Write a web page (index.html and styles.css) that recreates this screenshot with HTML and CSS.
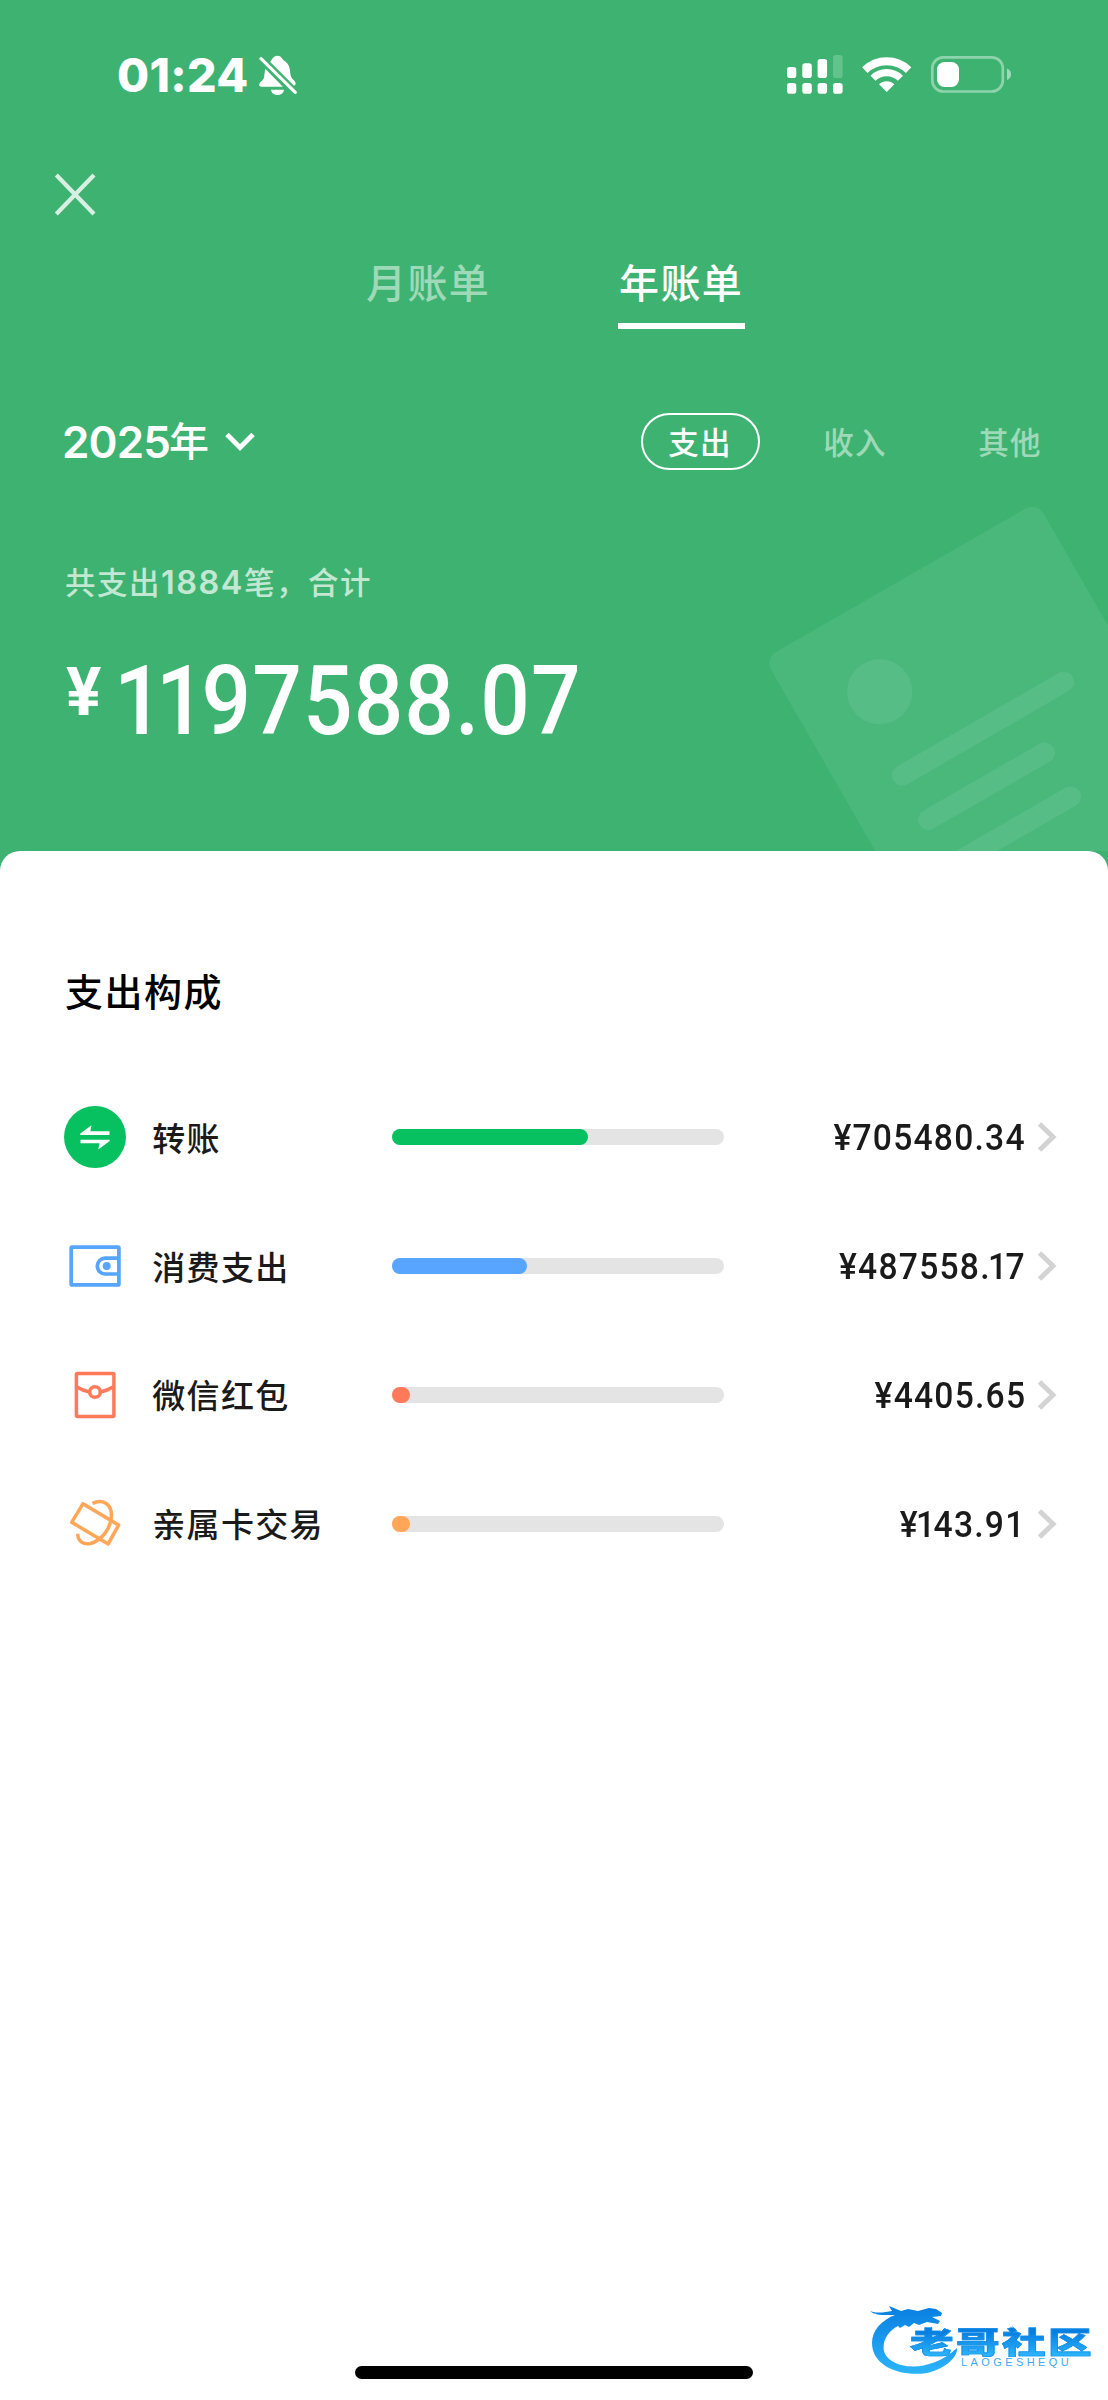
FILE: index.html
```html
<!DOCTYPE html>
<html lang="zh-CN">
<head>
<meta charset="utf-8">
<title>年账单</title>
<link rel="stylesheet" href="styles.css">
</head>
<body>
<div class="screen">
  <header class="hero">
    <svg class="hero-art" viewBox="760 500 348 351" aria-hidden="true">
      <rect x="764.7" y="658.6" width="314" height="520" rx="13" transform="rotate(-29.9 764.7 658.6)" fill="#fff" fill-opacity=".07"/>
      <g fill="#57bd86" stroke="#57bd86" stroke-linecap="round">
        <circle cx="879.7" cy="691.7" r="32.5" stroke="none"/>
        <path d="M902.3 775.3 1063.7 682M928.3 819.7 1044.7 752.7M1070.7 796.7 940 872" stroke-width="20.5"/>
      </g>
    </svg>

    <div class="status">
      <div class="status-left">
        <span class="clock">01:24</span>
        <svg width="40" height="42" viewBox="0 0 40 42" fill="#fff">
          <path d="M12 7.7C14 6.8 14.2 2 19.3 1.7C23.800 1.700 24 5.500 27 7.300C30.500 9.800 31.500 13 32 17C32.500 21.500 33 23.500 35.500 26C38.300 28.700 38.300 30.500 36 31.700Z"/>
          <path d="M7.300 14.700 24.900 32.700H3.500C.8 32.700.6 30 2.300 28.300C5.500 25.500 6.500 24 6.300 21Z"/>
          <path d="M13 35.700H26C25.500 39.300 22.700 41 19.500 41S13.500 39.300 13 35.700Z"/>
          <path d="M3 4.700 37.300 38.300" stroke="#fff" stroke-width="3.200" stroke-linecap="round"/>
        </svg>
      </div>
      <div class="status-right">
        <svg width="58" height="42" viewBox="0 0 58 42" fill="#fff">
          <rect x="1" y="13" width="9.300" height="11" rx="2.800"/>
          <rect x="16.300" y="9.300" width="9.500" height="14.700" rx="2.800"/>
          <rect x="31.600" y="5" width="9.500" height="19" rx="2.800"/>
          <rect x="47" y="1" width="9.600" height="23" rx="2.800" opacity=".2"/>
          <rect x="1" y="29" width="9.300" height="10.700" rx="2.800"/>
          <rect x="16.300" y="29" width="9.500" height="10.700" rx="2.800"/>
          <rect x="31.600" y="29" width="9.500" height="10.700" rx="2.800"/>
          <rect x="47" y="29" width="9.600" height="10.700" rx="2.800"/>
        </svg>
        <svg class="wifi" width="52" height="42" viewBox="0 0 52 42" fill="none" stroke="#fff">
          <path d="M3.800 16.100A31.500 31.500 0 0 1 47.600 16.100" stroke-width="7.800"/>
          <path d="M12 24.300A19.600 19.600 0 0 1 39.400 24.300" stroke-width="7.200"/>
          <path d="M18 30.300A11 11 0 0 1 33.400 30.300L25.700 38Z" fill="#fff" stroke="none"/>
        </svg>
        <svg width="82" height="42" viewBox="0 0 82 42">
          <rect x="2.300" y="3.300" width="70.500" height="34.200" rx="11" fill="none" stroke="#fff" stroke-opacity=".42" stroke-width="2.700"/>
          <rect x="7" y="8" width="22" height="25" rx="7.500" fill="#fff"/>
          <path d="M77 14.600Q81 16 81 20.300T77 26Z" fill="#fff" fill-opacity=".5"/>
        </svg>
      </div>
    </div>

    <svg class="close" width="44" height="44" viewBox="0 0 44 44"><path d="M3.300 3 41 42M41 3 3.300 42" stroke="#fff" stroke-opacity=".8" stroke-width="4.200"/></svg>

    <nav class="tabs">
      <span class="tab">月账单</span>
      <span class="tab tab-active">年账单</span>
    </nav>

    <div class="filters">
      <div class="year"><span class="year-number">2025</span><span class="year-unit">年</span>
        <svg class="year-arrow" width="30" height="20" viewBox="0 0 30 20"><path d="M2 2.500 15 15.500 28 2.500" fill="none" stroke="#fff" stroke-width="4.800"/></svg>
      </div>
      <div class="types">
        <span class="type type-active">支出</span>
        <span class="type">收入</span>
        <span class="type">其他</span>
      </div>
    </div>

    <p class="count">共支出<span class="count-number">1884</span>笔，合计</p>
    <p class="total"><span class="yen">¥</span><span class="digits"><span class="ones">11</span>97588.07</span></p>
  </header>

  <main class="panel">
    <h2 class="title">支出构成</h2>
    <div class="row">
      <svg class="icon" viewBox="0 0 64 64"><circle cx="32" cy="32" r="31" fill="#07c160"/><path d="M17.300 30H46.500V26.300H27.300L28.500 20.300 17.300 28.500ZM46.700 34.700H17.500V38.300H36.500L35.300 44.400 46.700 36Z" fill="#fff"/></svg>
      <span class="label">转账</span>
      <div class="bar"><div class="fill green" style="width:196px"></div></div>
      <span class="amount">¥705480.34</span>
      <svg class="chevron" viewBox="0 0 20 30"><path d="M2.500 2 16 15 2.500 28"/></svg>
    </div>
    <div class="row">
      <svg class="icon" viewBox="0 0 64 64" fill="none" stroke="#57a5ff" stroke-width="3.700"><rect x="8.200" y="13.200" width="47.700" height="37.700" rx="1"/><path d="M55.800 24.200H42.200A7.900 7.900 0 0 0 42.200 40H55.800"/><circle cx="43.700" cy="32" r="4" fill="#57a5ff" stroke="none"/></svg>
      <span class="label">消费支出</span>
      <div class="bar"><div class="fill blue" style="width:135.500px"></div></div>
      <span class="amount">¥487558.<span class="one">1</span>7</span>
      <svg class="chevron" viewBox="0 0 20 30"><path d="M2.500 2 16 15 2.500 28"/></svg>
    </div>
    <div class="row">
      <svg class="icon" viewBox="0 0 64 64" fill="none" stroke="#ff7a5a" stroke-width="3.500"><rect x="13.400" y="10.400" width="37.500" height="43" rx="1"/><circle cx="32" cy="29" r="5.300"/><path d="M14 24Q19.500 27.500 26.500 29M50 24Q44.500 27.500 37.500 29"/></svg>
      <span class="label">微信红包</span>
      <div class="bar"><div class="fill red" style="width:18px"></div></div>
      <span class="amount">¥4405.65</span>
      <svg class="chevron" viewBox="0 0 20 30"><path d="M2.500 2 16 15 2.500 28"/></svg>
    </div>
    <div class="row">
      <svg class="icon" viewBox="0 0 64 64" fill="none" stroke="#ffa659" stroke-width="3.500" stroke-linejoin="round"><path d="M19.900 11.800 55.600 33.100 45.200 51.900 8.700 30.300Z"/><path d="M29.500 11.400C39 6.500 49 11.500 48.400 24C48 36 39 48.500 27.500 51.500C20 53 14.500 49 14.800 41.700"/></svg>
      <span class="label">亲属卡交易</span>
      <div class="bar"><div class="fill orange" style="width:18px"></div></div>
      <span class="amount">¥<span class="one">1</span>43.91</span>
      <svg class="chevron" viewBox="0 0 20 30"><path d="M2.500 2 16 15 2.500 28"/></svg>
    </div>
  </main>

  <div class="watermark">
    <svg class="dragon" width="96" height="76" viewBox="0 0 96 76">
      <defs><linearGradient id="sky" x1="0" y1="0" x2="0" y2="1"><stop offset="0" stop-color="#087ee0"/><stop offset="1" stop-color="#2bb4fa"/></linearGradient></defs>
      <path fill="url(#sky)" d="M0 11C8 14 15 12 22 11L19 6 31 11 38 9 48 11 59 8 66 9 72 13 71 16 62 17 70 21 68 24 57 22 49 25 44 23 39 27 35 25 30 28 28 26C18 31 12 41 14 51C18 68 57 76 87 48C88 58 74 69 57 73C32 77 2 67 2 43C2 30 12 20 25 15C15 15 6 16 0 11Z"/>
    </svg>
    <div class="watermark-name">老哥社区</div>
    <div class="watermark-latin">LAOGESHEQU</div>
  </div>
  <div class="home-bar"></div>
</div>
</body>
</html>
```
FILE: styles.css
```css
* { box-sizing: border-box; }
body {
  margin: 0;
  font-family: Inter, "Noto Sans CJK SC", sans-serif;
  background: #3eb371;
}
p, h2 { margin: 0; }
svg { display: block; flex: none; }
.screen {
  position: relative;
  display: flex;
  flex-direction: column;
  width: 1108px;
  height: 2400px;
  overflow: hidden;
  background: #3eb371;
  color: #fff;
}

.hero { position: relative; flex: none; height: 851px; padding-top: 54px; }
.hero-art { position: absolute; right: 0; top: 500px; width: 348px; height: 351px; }

.status { display: flex; justify-content: space-between; height: 42px; padding: 0 96px 0 117px; }
.status-left, .status-right { display: flex; align-items: center; }
.clock { width: 141px; font-size: 46.500px; font-weight: 800; line-height: 42px; letter-spacing: .300px; white-space: nowrap; }
.wifi { margin: 0 17px; }

.close { margin: 76px 0 0 53px; }
.tabs { display: flex; gap: 125px; margin-top: 37px; padding-left: 366px; }
.tab {
  width: 127px;
  height: 76px;
  padding-top: 1px;
  font-size: 40px;
  font-weight: 500;
  line-height: 60px;
  letter-spacing: 1.400px;
  color: rgba(255, 255, 255, .5);
}
.tab-active { padding-left: 1px; color: #fff; border-bottom: 6px solid #fff; }

.filters { display: flex; justify-content: space-between; align-items: center; height: 57px; margin-top: 84px; padding: 0 38px 0 62px; }
.year { display: flex; align-items: center; line-height: 56px; font-weight: 500; }
.year-number { width: 107px; font-size: 44px; font-weight: 600; letter-spacing: -.900px; }
.year-unit { font-size: 40px; }
.year-arrow { margin-left: 16px; }
.types { display: flex; gap: 36px; }
.type {
  width: 119px;
  height: 57px;
  padding-top: 1px;
  padding-right: 1px;
  border: 2.500px solid transparent;
  border-radius: 29px;
  font-size: 30.500px;
  font-weight: 500;
  line-height: 53px;
  letter-spacing: 1.200px;
  text-align: center;
  color: rgba(255, 255, 255, .5);
}
.type-active { border-color: #fff; color: #fff; }

.count { margin: 91px 0 0 65px; font-size: 30.500px; font-weight: 500; line-height: 44px; letter-spacing: 1.500px; color: rgba(255, 255, 255, .7); }
.count-number { font-size: 32.500px; font-weight: 600; letter-spacing: 1.500px; }
.total { display: flex; height: 110px; margin: 41px 0 0 66px; font-family: Roboto, sans-serif; font-size: 97px; font-weight: 500; line-height: 110px; }
.yen { width: 48px; font-size: 66px; font-weight: 700; line-height: 94px; }
.digits { letter-spacing: 1.200px; transform: scaleX(.9); transform-origin: 0 50%; }
.ones { margin-right: 4px; letter-spacing: -8.500px; }

.panel { flex: 1; padding: 115px 0 0; border-radius: 20px 20px 0 0; background: #fff; color: #000; }
.title { padding-left: 65px; margin-bottom: 55px; font-size: 38px; font-weight: 500; line-height: 52px; letter-spacing: 1.500px; }
.row { display: flex; align-items: center; height: 128.800px; padding: 0 51px 0 63.300px; color: #1a1a1a; }
.icon { width: 64px; height: 64px; }
.label { width: 239.700px; margin-left: 25px; padding-bottom: 1px; font-size: 33px; font-weight: 500; letter-spacing: 1.300px; }
.bar { width: 332px; height: 16px; border-radius: 8px; background: #e4e4e4; }
.fill { height: 16px; border-radius: 8px; }
.green { background: #07c160; }
.blue { background: #57a5ff; }
.red { background: #ff7a5a; }
.orange { background: #ffa659; }
.amount {
  margin-left: auto;
  margin-right: 11px;
  padding-top: 2px;
  font-family: Roboto, sans-serif;
  font-size: 36px;
  font-weight: 500;
  letter-spacing: 1.300px;
  transform: scaleX(.935);
  transform-origin: 100% 50%;
}
.one { margin: 0 -3px; }
.chevron { width: 20px; height: 30px; fill: none; stroke: #d3d3d3; stroke-width: 5; }

.watermark { position: absolute; left: 870px; top: 2300px; width: 230px; height: 80px; }
.dragon { position: absolute; left: 0; top: 0; }
.watermark-name {
  position: absolute;
  left: 40px;
  top: 24px;
  font-size: 37px;
  font-weight: 900;
  line-height: 38px;
  white-space: nowrap;
  letter-spacing: 2px;
  transform: scale(1.180, .8);
  transform-origin: 0 50%;
  color: transparent;
  -webkit-text-stroke: .8px #168fe8;
  background: linear-gradient(#087ee0 15%, #2bb4fa 90%);
  -webkit-background-clip: text;
  background-clip: text;
}
.watermark-latin { position: absolute; left: 91px; top: 55px; font: 400 11px/14px "Liberation Sans", sans-serif; letter-spacing: 3.400px; color: #3fa9ef; }
.home-bar { position: absolute; left: 355px; top: 2366px; width: 398px; height: 13px; border-radius: 7px; background: #000; }
```
